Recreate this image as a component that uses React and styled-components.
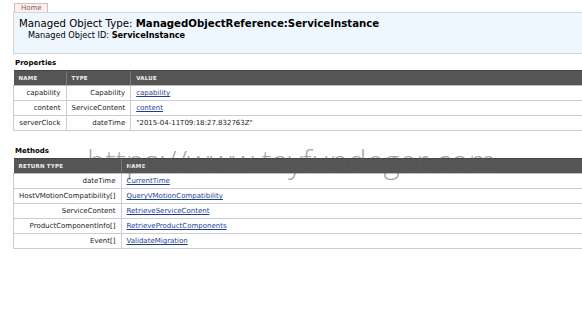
import React from "react";
import styled, { createGlobalStyle } from "styled-components";

const Global = createGlobalStyle`
  html, body { margin: 0; padding: 0; background: #fff; overflow: hidden; }
  body { font-family: "DejaVu Sans", Verdana, sans-serif; color: #000; }
`;

const Page = styled.div`
  position: relative;
  width: 582px;
  height: 325px;
  overflow: hidden;
  padding: 3px 0 0 13px;
  box-sizing: border-box;
`;

const Inner = styled.div`
  width: 600px;
  display: flex;
  flex-direction: column;
  align-items: stretch;
`;

const Tab = styled.div`
  align-self: flex-start;
  margin-left: 1px;
  padding: 0 5px 0 6px;
  height: 8px;
  line-height: 9px;
  font-size: 7px;
  color: #8a5a5a;
  background: #fcefef;
  border: 1px solid #d9b9b9;
  border-bottom: none;
`;

const Header = styled.div`
  background: #eef6fe;
  border: 1px solid #d6d6d6;
  border-right: none;
  height: 42px;
  padding: 5px 0 0 5px;
  box-sizing: border-box;
`;

const Title = styled.div`
  font-size: 10.2px;
  line-height: 12px;
  white-space: nowrap;
`;

const Sub = styled.div`
  font-size: 8.2px;
  line-height: 10px;
  padding-left: 9px;
  white-space: nowrap;
`;

const Section = styled.h2`
  margin: 0;
  font-size: 7px;
  font-weight: bold;
  padding-left: 2px;
  line-height: 10px;
  margin-top: ${(p) => p.$top}px;
  margin-bottom: 2px;
`;

const Table = styled.table`
  border-collapse: collapse;
  width: 100%;
  font-size: 7px;
`;

const Th = styled.th`
  background: #555;
  color: #f0f0f0;
  font-size: 5.5px;
  font-weight: bold;
  text-align: left;
  height: 14px;
  padding: 0 5px;
  border-left: 1px solid #7a7a7a;
  border-top: 1px solid #444;
  border-bottom: 1px solid #bbb;
  width: ${(p) => p.$w || "auto"};
  letter-spacing: 0.2px;
  &:first-child { border-left: none; }
`;

const Td = styled.td`
  height: 14px;
  padding: 0 5px;
  text-align: ${(p) => (p.$right ? "right" : "left")};
  border: 1px solid #cdcdcd;
  border-top: none;
  white-space: nowrap;
  color: #222;
  &:last-child { border-right: none; }
`;

const Link = styled.a`
  color: #1c3f94;
  text-decoration: underline;
`;

const Watermark = styled.div`
  position: absolute;
  left: 87px;
  top: 140px;
  font-family: "Open Sans", "DejaVu Sans", sans-serif;
  font-size: 31px;
  font-weight: 300;
  letter-spacing: -0.05px;
  color: rgba(90, 90, 90, 0.55);
  white-space: nowrap;
  pointer-events: none;
`;

const props = [
  ["capability", "Capability", "capability", true],
  ["content", "ServiceContent", "content", true],
  ["serverClock", "dateTime", "\"2015-04-11T09:18:27.832763Z\"", false],
];

const methods = [
  ["dateTime", "CurrentTime"],
  ["HostVMotionCompatibility[]", "QueryVMotionCompatibility"],
  ["ServiceContent", "RetrieveServiceContent"],
  ["ProductComponentInfo[]", "RetrieveProductComponents"],
  ["Event[]", "ValidateMigration"],
];

export default function App() {
  return (
    <Page>
      <Global />
      <Inner>
        <Tab>Home</Tab>
        <Header>
          <Title>
            Managed Object Type: <b>ManagedObjectReference:ServiceInstance</b>
          </Title>
          <Sub>
            Managed Object ID: <b>ServiceInstance</b>
          </Sub>
        </Header>
        <Section $top={4}>Properties</Section>
        <Table>
          <thead>
            <tr>
              <Th $w="42px">NAME</Th>
              <Th $w="53px">TYPE</Th>
              <Th>VALUE</Th>
            </tr>
          </thead>
          <tbody>
            {props.map(([n, t, v, link]) => (
              <tr key={n}>
                <Td $right>{n}</Td>
                <Td $right>{t}</Td>
                <Td>{link ? <Link href="#">{v}</Link> : v}</Td>
              </tr>
            ))}
          </tbody>
        </Table>
        <Section $top={15}>Methods</Section>
        <Table>
          <thead>
            <tr>
              <Th $w="96px">RETURN TYPE</Th>
              <Th>NAME</Th>
            </tr>
          </thead>
          <tbody>
            {methods.map(([r, n]) => (
              <tr key={n}>
                <Td $right>{r}</Td>
                <Td>
                  <Link href="#">{n}</Link>
                </Td>
              </tr>
            ))}
          </tbody>
        </Table>
      </Inner>
      <Watermark>https://www.tayfundeger.com</Watermark>
    </Page>
  );
}
